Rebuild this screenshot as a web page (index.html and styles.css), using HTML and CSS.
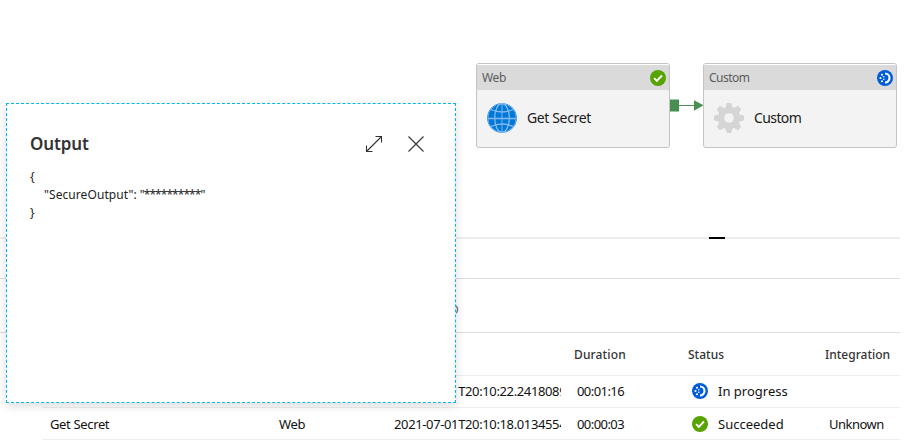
FILE: index.html
```html
<!DOCTYPE html>
<html lang="en">
<head>
<meta charset="utf-8">
<title>Pipeline run</title>
<link rel="stylesheet" href="styles.css">
</head>
<body>
<svg class="defs" width="0" height="0" aria-hidden="true">
  <symbol id="ok" viewBox="0 0 16 16"><circle cx="8" cy="8" r="8" fill="#57a300"/><path d="M4.1 8.2 6.8 10.9 12 5.5" fill="none" stroke="#fff" stroke-width="1.9"/></symbol>
  <symbol id="progress" viewBox="0 0 16 16"><circle cx="8" cy="8" r="8" fill="#015cda"/><path d="M8 3.5A4.5 4.5 0 0 1 8 12.5" fill="none" stroke="#fff" stroke-width="2.1"/><g fill="#fff"><circle cx="5" cy="4.7" r="1.05"/><circle cx="3.5" cy="8" r="1.05"/><circle cx="5" cy="11.3" r="1.05"/><circle cx="6.8" cy="6.8" r=".8"/><circle cx="6.8" cy="9.2" r=".8"/></g></symbol>
</svg>
<main class="page">
  <section class="canvas">
    <article class="node node-web">
      <header class="node-head"><span>Web</span><svg class="status-icon"><use href="#ok"/></svg></header>
      <div class="node-body">
        <svg class="node-icon" viewBox="0 0 30 30"><circle cx="15" cy="15" r="14.5" fill="#0078d7" stroke="#2e8ddf"/><g fill="none" stroke="#83b9f0" stroke-width="1.3"><circle cx="15" cy="15" r="14.2" stroke-width=".7"/><ellipse cx="15" cy="15" rx="7.3" ry="14.3"/><path d="M1 15.5H29M4 6.5Q15 11.5 26 6.5M4 23.5Q15 18.5 26 23.5"/><path d="M15 1V29" stroke-width=".9"/></g></svg>
        <span class="t-getsecret">Get Secret</span>
      </div>
    </article>
    <svg class="link" width="34" height="14" viewBox="0 0 34 14"><path d="M0 1.5H9V13.5H0Z" fill="#478f50"/><path d="M9 7.5H25" stroke="#478f50"/><path d="M24 2.3 33.5 7.3 24 12.7Z" fill="#478f50"/></svg>
    <article class="node node-custom">
      <header class="node-head"><span class="t-customhead">Custom</span><svg class="status-icon"><use href="#progress"/></svg></header>
      <div class="node-body">
        <svg class="node-icon" viewBox="-15 -15 30 30"><g fill="#d5d5d5"><g id="teeth"><path id="tooth" d="M-4.2-9-2.2-15H2.2L4.2-9V9L2.2 15H-2.2L-4.2 9Z"/><use href="#tooth" transform="rotate(90)"/></g><use href="#teeth" transform="rotate(45)"/><circle r="10.6"/></g><circle r="4.8" fill="#f3f3f3"/></svg>
        <span class="t-custom">Custom</span>
      </div>
    </article>
  </section>
  <div class="splitter"><span class="grip"></span></div>
  <div class="tabs"></div>
  <div class="run-info"><span>D</span></div>
  <section class="runs">
    <div class="row head"><span></span><span></span><span></span><span class="t-duration">Duration</span><span class="t-status">Status</span><span class="t-integration">Integration</span></div>
    <div class="row first"><span class="name">Custom</span><span>Custom</span><span class="time">2021-07-01T20:10:22.2418089</span><span class="dur">00:01:16</span><span class="state"><svg class="status-icon"><use href="#progress"/></svg><span>In progress</span></span><span></span></div>
    <div class="row"><span class="name">Get Secret</span><span class="type">Web</span><span class="time">2021-07-01T20:10:18.0134554</span><span class="dur">00:00:03</span><span class="state"><svg class="status-icon"><use href="#ok"/></svg><span>Succeeded</span></span><span class="unknown">Unknown</span></div>
  </section>
  <aside class="output">
    <header class="output-head">
      <h2>Output</h2>
      <svg width="18" height="18" viewBox="0 0 18 18"><path d="M1.5 16.5 16.5 1.5M10.5 1.5H16.5V7.5M1.5 10.5V16.5H7.5" /></svg>
      <svg width="18" height="18" viewBox="0 0 18 18"><path d="M1.5 1.5 16.5 16.5M16.5 1.5 1.5 16.5"/></svg>
    </header>
    <div class="code"><div>{</div><div class="indent"><span class="key">"SecureOutput":</span> <span class="stars">"**********"</span></div><div>}</div></div>
  </aside>
</main>
</body>
</html>
```
FILE: styles.css
```css
* { box-sizing: border-box; }
body { margin: 0; background: #fff; font: 13px/18px "Noto Sans", "Open Sans", sans-serif; color: #111; overflow: hidden; }
.defs { position: absolute; }
.page { position: relative; width: 900px; height: 443px; }
.canvas { position: relative; height: 237px; }
.status-icon { width: 16px; height: 16px; flex: none; }

.node { position: absolute; top: 63px; width: 194px; height: 85px; border: 1px solid #c4c4c4; border-radius: 3px; background: #f3f3f3; overflow: hidden; }
.node-web { left: 476px; }
.node-custom { left: 703px; }
.node-head { display: flex; align-items: center; justify-content: space-between; height: 26px; padding: 1px 3px 0 5px; border-top: 1px solid #fff; background: #dadada; color: #5c5c5c; font-size: 12px; letter-spacing: -.4px; }
.t-customhead { letter-spacing: -.5px; }
.node-body { display: flex; align-items: center; gap: 10px; height: 57px; padding: 0 0 1px 10px; font-size: 14px; color: #1a1a1a; }
.t-getsecret { letter-spacing: -.37px; }
.t-custom { letter-spacing: -.6px; }
.node-icon { width: 30px; height: 30px; }
.link { position: absolute; left: 670px; top: 98px; }

.splitter { height: 2px; background: #ededed; }
.grip { display: block; width: 16px; height: 2px; margin-left: 709px; background: #000; }
.tabs { height: 40px; border-bottom: 1px solid #dcdcdc; }
.run-info { height: 54px; padding: 22px 0 0 450px; border-bottom: 1px solid #dcdcdc; color: #666; font-size: 12px; }

.runs { margin-left: 42px; }
.row { display: grid; grid-template-columns: 237px 115px 183px 111px 141px 71px; align-items: center; height: 32px; border-bottom: 1px solid #eee; white-space: nowrap; }
.row.head { height: 43px; padding-top: 2px; font-size: 12px; font-weight: 500; color: #333; }
.row.head .t-duration { margin-left: -3px; letter-spacing: .15px; }
.row.head .t-integration { margin-left: -4px; }
.row.first { padding-bottom: 1px; }
.name { padding-left: 8px; letter-spacing: -.35px; }
.type { letter-spacing: -.3px; }
.time { width: 167px; overflow: hidden; letter-spacing: -.37px; }
.dur { letter-spacing: -.57px; }
.unknown { letter-spacing: -.5px; }
.state { display: flex; align-items: center; gap: 10px; padding-left: 4px; }

.output { position: absolute; left: 6px; top: 103px; width: 450px; height: 300px; padding: 30px 30px 0 23px; border: 1px dashed #00b7f0; background: #fff; box-shadow: 0 3px 9px rgba(0, 0, 0, .14); }
.output-head { display: flex; align-items: center; gap: 24px; height: 20px; }
.output-head h2 { flex: 1; margin: 0; font-size: 17px; line-height: 20px; font-weight: 600; letter-spacing: -.1px; color: #333; }
.output-head svg { fill: none; stroke: #333; stroke-width: 1.1; }
.code { margin-top: 14px; font-size: 12px; color: #222; }
.indent { padding-left: 14px; }
.key { letter-spacing: .08px; }
.stars { letter-spacing: -.95px; }
```
